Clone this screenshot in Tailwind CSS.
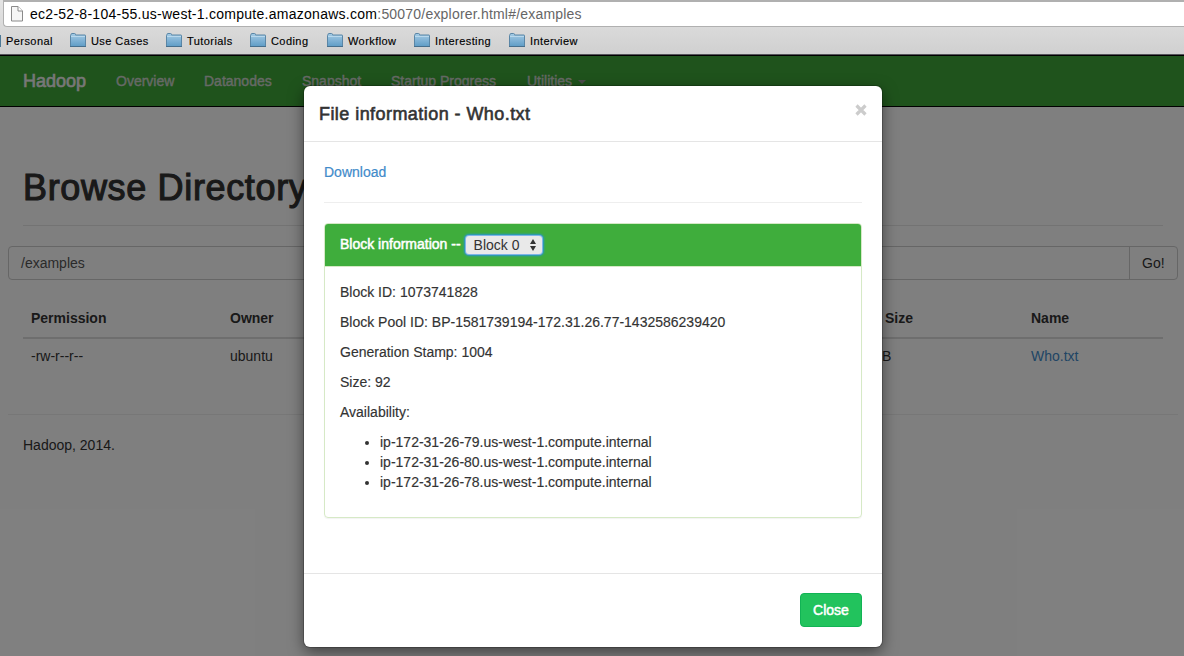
<!DOCTYPE html>
<html lang="en">
<head>
<meta charset="utf-8">
<title>Browsing HDFS</title>
<script src="https://cdn.jsdelivr.net/npm/@tailwindcss/browser@4"></script>
</head>
<body class="flex h-[656px] w-[1184px] flex-col overflow-hidden bg-white font-['Liberation_Sans',Arial,sans-serif] text-sm leading-5 text-[#333]">
<svg class="absolute h-0 w-0">
  <defs>
    <linearGradient id="fold" x1="0" y1="0" x2="0" y2="1"><stop offset="0" stop-color="#a5cbe5"/><stop offset="1" stop-color="#5f9cc6"/></linearGradient>
    <symbol id="folder" viewBox="0 0 16 15"><path d="M.5 13.500v-11q0-.5.5-.5V1.500Q1 .5 2 .5h2.500q1 0 1 1V2H15q.5 0 .5.5v11z" fill="url(#fold)" stroke="#5a86a6"/><path d="M1 3.500h14" stroke="#b9d8ec"/><path d="M0 13.500h16" stroke="#466f8d"/></symbol>
  </defs>
</svg>

<!-- Browser chrome -->
<header class="flex h-[55px] shrink-0 flex-col border-b border-[#55555a] bg-linear-to-b from-[#e4e4e4] to-[#d0d0d0] text-black">
  <div class="ml-[3px] flex h-[27px] items-center rounded-bl border border-t-2 border-r-0 border-[#b0b0b0] bg-white pb-px pl-[7px]">
    <svg class="h-4 w-3" viewBox="0 0 12 16"><path d="M.5.5h6.500l4.500 4.500v10H.5z" fill="#f6f6f6" stroke="#8a8a8a"/><path d="M7 .5V5h4.500" fill="#fff" stroke="#8a8a8a"/></svg>
    <p class="ml-[7px] text-sm whitespace-nowrap"><span class="tracking-[0.27px]">ec2-52-8-104-55.us-west-1.compute.amazonaws.com</span><span class="tracking-[0.2px] text-[#666]">:50070/explorer.html#/examples</span></p>
  </div>
  <nav class="flex h-[27px] items-center text-[11px] tracking-[0.43px] whitespace-nowrap [-webkit-text-stroke:0.15px]">
    <span class="h-3 w-px bg-[#4c7896]"></span>
    <a class="ml-[5px] w-[64px]">Personal</a>
    <a class="flex w-[96px] items-center gap-[5px]"><svg class="h-[15px] w-4"><use href="#folder"/></svg>Use Cases</a>
    <a class="flex w-[84px] items-center gap-[5px]"><svg class="h-[15px] w-4"><use href="#folder"/></svg>Tutorials</a>
    <a class="flex w-[77px] items-center gap-[5px]"><svg class="h-[15px] w-4"><use href="#folder"/></svg>Coding</a>
    <a class="flex w-[87px] items-center gap-[5px]"><svg class="h-[15px] w-4"><use href="#folder"/></svg>Workflow</a>
    <a class="flex w-[95px] items-center gap-[5px]"><svg class="h-[15px] w-4"><use href="#folder"/></svg>Interesting</a>
    <a class="flex items-center gap-[5px]"><svg class="h-[15px] w-4"><use href="#folder"/></svg>Interview</a>
  </nav>
</header>

<div class="relative h-[601px]">
  <!-- Page -->
  <nav class="flex h-[52px] items-center border-y border-black bg-[#3fa639] pl-[23px] whitespace-nowrap text-[#ccd3cc] [-webkit-text-stroke:0.4px]">
    <a class="w-[93px] text-lg text-[#eee] [-webkit-text-stroke:0.6px]">Hadoop</a>
    <a class="w-[88px]">Overview</a>
    <a class="w-[98px]">Datanodes</a>
    <a class="w-[89px]">Snapshot</a>
    <a class="w-[136px]">Startup Progress</a>
    <a class="flex items-center gap-1.5">Utilities <span class="mt-0.5 border-x-4 border-t-4 border-x-transparent border-t-[#999]"></span></a>
  </nav>
  <main class="pr-1.5 pl-2">
    <h1 class="mr-[15px] ml-[15px] border-b border-[#e7e7e7] pt-[61px] pb-[17px] text-4xl leading-[40px] tracking-[0.65px] [-webkit-text-stroke:1.1px]">Browse Directory</h1>
    <div class="mt-5 flex h-[34px] rounded border border-[#ccc] leading-8">
      <span class="flex-1 pl-3 text-[#555]">/examples</span>
      <span class="w-12 border-l border-[#ccc] pl-3">Go!</span>
    </div>
    <table class="mt-5 ml-[15px] w-[1140px] table-fixed text-left">
      <thead><tr class="h-[38px] border-b-2 border-[#ddd]"><th class="w-[199px] pb-0.5 pl-2">Permission</th><th class="w-[613px] pb-0.5 pl-2">Owner</th><th class="w-[188px] pb-0.5 pl-2">Block Size</th><th class="pb-0.5 pl-2">Name</th></tr></thead>
      <tbody><tr class="h-[36px]"><td class="pb-0.5 pl-2">-rw-r--r--</td><td class="pb-0.5 pl-2">ubuntu</td><td class="pb-0.5 pl-2">128 MB</td><td class="pb-0.5 pl-2 text-[#428bca]">Who.txt</td></tr></tbody>
    </table>
    <p class="mt-10 border-t border-[#eee] pt-5 pl-[15px]">Hadoop, 2014.</p>
  </main>

  <!-- Modal dialog over the dimmed page -->
  <div class="absolute inset-0 bg-black/50"></div>
  <section class="absolute top-[31px] left-[304px] flex h-[561px] w-[578px] flex-col rounded-md bg-white shadow-[0_0_0_1px_rgba(0,0,0,0.2),0_5px_15px_rgba(0,0,0,0.5)]">
    <div class="flex h-14 items-center justify-between border-b border-[#e5e5e5] pr-[15px] pl-[15px]">
      <h4 class="text-lg tracking-[0.44px] [-webkit-text-stroke:0.6px]">File information - Who.txt</h4>
      <svg class="mb-[7px] h-3 w-3" viewBox="0 0 12 12"><path d="M1.500 1.500l9 9M10.500 1.500l-9 9" stroke="#ccc" stroke-width="3.200"/></svg>
    </div>
    <div class="flex-1 px-5 pt-5">
      <p class="border-b border-[#eee] pb-5 text-[#428bca] [-webkit-text-stroke:0.2px]"><a>Download</a></p>
      <div class="mt-5 h-[295px] rounded border border-[#d6e9c6] shadow-[0_1px_1px_rgba(0,0,0,0.05)]">
        <div class="flex h-[42px] items-center rounded-t-[3px] bg-[#3fad3c] pl-[15px] text-white">
          <span class="pb-0.5 [-webkit-text-stroke:0.5px]">Block information --</span>
          <span class="ml-[5px] flex h-[18px] w-[76px] items-center justify-between rounded-[3px] bg-[#e9e9e9] pr-1.5 pl-2 text-[#333] shadow-[0_0_0_1px_#7db4e8,0_0_2px_2px_#2795d0]">Block 0<svg class="h-3 w-1.5" viewBox="0 0 6 12"><path d="M0 5L3 0l3 5zM0 7h6l-3 5z" fill="#333"/></svg></span>
        </div>
        <div class="flex flex-col gap-[10px] border-t border-[#d6e9c6] p-[15px] [-webkit-text-stroke:0.15px]">
          <p>Block ID: 1073741828</p>
          <p>Block Pool ID: BP-1581739194-172.31.26.77-1432586239420</p>
          <p>Generation Stamp: 1004</p>
          <p>Size: 92</p>
          <p>Availability:</p>
          <ul class="list-disc pl-10"><li>ip-172-31-26-79.us-west-1.compute.internal</li><li>ip-172-31-26-80.us-west-1.compute.internal</li><li>ip-172-31-26-78.us-west-1.compute.internal</li></ul>
        </div>
      </div>
    </div>
    <div class="flex h-[74px] justify-end border-t border-[#e5e5e5] px-5 pt-[19px]">
      <button class="h-[34px] w-[62px] rounded border border-[#12b355] bg-[#22c35d] text-white [-webkit-text-stroke:0.5px]">Close</button>
    </div>
  </section>
</div>
</body>
</html>
